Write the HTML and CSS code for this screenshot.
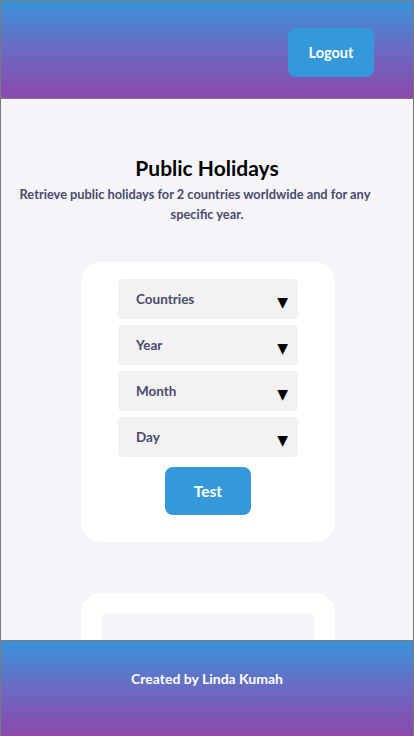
FILE: index.html
```html
<!DOCTYPE html>
<html lang="en">
<head>
<meta charset="utf-8">
<title>Public Holidays</title>
<link rel="stylesheet" href="styles.css">
</head>
<body>
<header class="topbar">
  <button class="btn logout">Logout</button>
</header>
<main class="content">
  <h1 class="title">Public Holidays</h1>
  <p class="subtitle">Retrieve public holidays for 2 countries worldwide and for any specific year.</p>
  <section class="card">
    <div class="select"><span>Countries</span><span class="arrow">&#9660;</span></div>
    <div class="select"><span>Year</span><span class="arrow">&#9660;</span></div>
    <div class="select"><span>Month</span><span class="arrow">&#9660;</span></div>
    <div class="select"><span>Day</span><span class="arrow">&#9660;</span></div>
    <button class="btn test">Test</button>
  </section>
  <section class="card results">
    <div class="result-box"></div>
  </section>
</main>
<footer class="footer">Created by Linda Kumah</footer>
</body>
</html>
```
FILE: styles.css
```css
* { box-sizing: border-box; }
html, body { margin: 0; padding: 0; }
body {
  font-family: Lato, "Open Sans", sans-serif;
  background: #f5f5f9;
  border: 1px solid #7a7a7a;
  border-bottom: none;
  min-height: 736px;
}
.topbar {
  height: 98px;
  border-bottom: 1px solid #7a7a7a;
  background: linear-gradient(to bottom, #3993da 0%, #6b6ac2 50%, #8b48ad 100%);
  display: flex;
  justify-content: flex-end;
  align-items: flex-start;
  padding: 27px 39px 0 0;
}
.btn {
  border: none;
  background: #3498db;
  color: #fff;
  font-family: inherit;
  font-weight: 700;
  border-radius: 8px;
  cursor: pointer;
}
.logout {
  width: 86px;
  height: 49px;
  font-size: 14.5px;
}
.content {
  display: flex;
  flex-direction: column;
  align-items: center;
  padding: 56px 0 120px;
}
.title {
  margin: 0;
  font-size: 21px;
  font-weight: 700;
  color: #000;
  line-height: 26px;
}
.subtitle {
  margin: 3px 0 0;
  padding: 0 33px;
  text-align: center;
  text-indent: -24px;
  font-size: 12.8px;
  font-weight: 700;
  line-height: 20px;
  color: #4a4a6e;
}
.card {
  width: 254px;
  background: #fff;
  border-radius: 20px;
  padding: 17px 37px 27px;
  margin: 38px 0 0 2px;
  display: flex;
  flex-direction: column;
  align-items: center;
  gap: 6px;
}
.select {
  width: 180px;
  height: 40px;
  background: #f2f2f2;
  border-radius: 4px;
  display: flex;
  align-items: center;
  justify-content: space-between;
  padding: 0 10px 0 18px;
  font-size: 13.5px;
  font-weight: 700;
  color: #4a4a6e;
}
.arrow {
  color: #000;
  font-size: 14px;
  font-family: "DejaVu Sans", sans-serif;
  padding-top: 6px;
}
.test {
  margin-top: 4px;
  width: 86px;
  height: 48px;
  font-size: 15.5px;
}
.results {
  margin-top: 51px;
  padding: 20px 21px;
  height: 200px;
}
.result-box {
  width: 100%;
  height: 150px;
  background: #f5f5f9;
  border-radius: 4px;
}
.footer {
  position: fixed;
  left: 0;
  right: 0;
  bottom: 0;
  height: 96px;
  border: 1px solid #7a7a7a;
  border-bottom: none;
  background: linear-gradient(to bottom, #3993da 0%, #6b6ac2 50%, #8b48ad 100%);
  color: #fff;
  font-weight: 700;
  font-size: 14px;
  display: flex;
  justify-content: center;
  align-items: center;
  padding-bottom: 20px;
}
```
